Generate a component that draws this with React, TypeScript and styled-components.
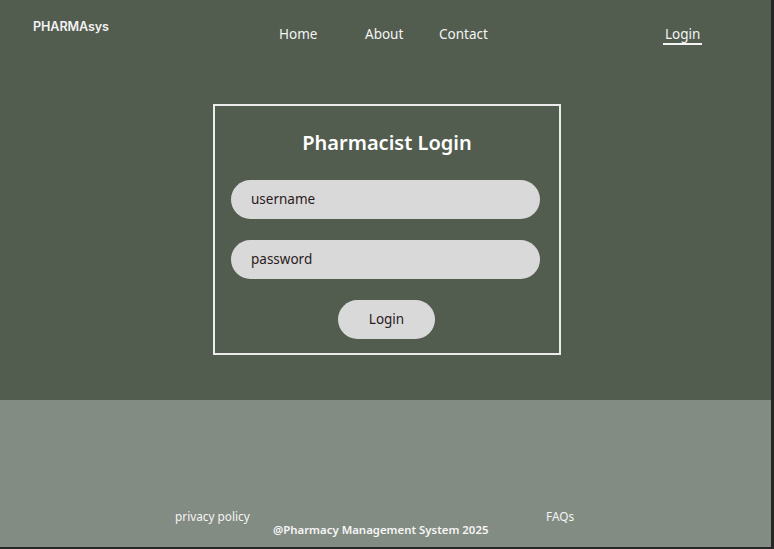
import React from "react";
import styled, { createGlobalStyle } from "styled-components";

const Global = createGlobalStyle`
  html, body { margin: 0; padding: 0; background: #262626; }
  body { font-family: "Noto Sans", "Open Sans", sans-serif; }
  * { box-sizing: border-box; }
`;

const Page = styled.div`
  width: 771px;
  height: 547px;
  display: flex;
  flex-direction: column;
`;

const Hero = styled.section`
  height: 400px;
  background: #525c4f;
  display: flex;
  flex-direction: column;
`;

const Nav = styled.nav`
  display: grid;
  grid-template-columns: 246px 386px auto;
  padding-left: 33px;
  height: 104px;
`;

const Logo = styled.div`
  font-family: Inter, sans-serif;
  font-weight: 600;
  font-size: 12.6px;
  color: #f2f2f2;
  line-height: 16px;
  padding-top: 19px;
  letter-spacing: -0.1px;
`;

const Links = styled.div`
  display: flex;
  padding-top: 26px;
`;

const NavLink = styled.a<{ $w?: number }>`
  width: ${(p) => (p.$w ? `${p.$w}px` : "auto")};
  font-size: 13.5px;
  line-height: 16px;
  color: #f4f4f4;
  text-decoration: none;
`;

const LoginLink = styled.a`
  align-self: start;
  margin-top: 26px;
  font-size: 13.5px;
  line-height: 16px;
  color: #f4f4f4;
  text-decoration: none;
  padding: 0 2px 1px;
  border-bottom: 2px solid #f4f4f4;
  justify-self: start;
  margin-left: -2px;
`;

const Card = styled.form`
  width: 348px;
  height: 251px;
  margin-left: 213px;
  border: 2px solid #ececec;
  display: flex;
  flex-direction: column;
  align-items: flex-start;
  padding: 25px 0 0 16px;
`;

const Title = styled.h1`
  align-self: center;
  margin: 0 0 25px -16px;
  font-size: 20px;
  line-height: 24px;
  font-weight: 600;
  color: #ffffff;
`;

const Field = styled.input`
  width: 309px;
  height: 39px;
  border: none;
  border-radius: 20px;
  background: #d9d9d9;
  padding: 0 20px 2px;
  font-family: inherit;
  font-size: 13.5px;
  color: #2b1a1c;
  margin-bottom: 21px;
  outline: none;
  &::placeholder { color: #2b1a1c; opacity: 1; }
`;

const Button = styled.button`
  width: 97px;
  height: 39px;
  margin-left: 107px;
  border: none;
  border-radius: 20px;
  background: #d9d9d9;
  font-family: inherit;
  font-size: 13.5px;
  color: #2b1a1c;
  padding-bottom: 2px;
`;

const Footer = styled.footer`
  flex: 1;
  background: #838c83;
  padding-top: 109px;
  display: flex;
  flex-direction: column;
`;

const FooterRow = styled.div`
  display: flex;
  padding-left: 175px;
`;

const FooterLink = styled.a<{ $w?: number }>`
  width: ${(p) => (p.$w ? `${p.$w}px` : "auto")};
  font-size: 11.8px;
  line-height: 14px;
  color: #f4f4f4;
  text-decoration: none;
`;

const Copy = styled.div`
  font-size: 11.4px;
  line-height: 14px;
  font-weight: 600;
  color: #f6f6f6;
  padding-left: 273px;
`;

export default function App() {
  return (
    <>
      <Global />
      <Page>
        <Hero>
          <Nav>
            <Logo>PHARMAsys</Logo>
            <Links>
              <NavLink $w={86}>Home</NavLink>
              <NavLink $w={74}>About</NavLink>
              <NavLink>Contact</NavLink>
            </Links>
            <LoginLink>Login</LoginLink>
          </Nav>
          <Card onSubmit={(e) => e.preventDefault()}>
            <Title>Pharmacist Login</Title>
            <Field placeholder="username" />
            <Field placeholder="password" type="password" />
            <Button type="submit">Login</Button>
          </Card>
        </Hero>
        <Footer>
          <FooterRow>
            <FooterLink $w={371}>privacy policy</FooterLink>
            <FooterLink>FAQs</FooterLink>
          </FooterRow>
          <Copy>@Pharmacy Management System 2025</Copy>
        </Footer>
      </Page>
    </>
  );
}
